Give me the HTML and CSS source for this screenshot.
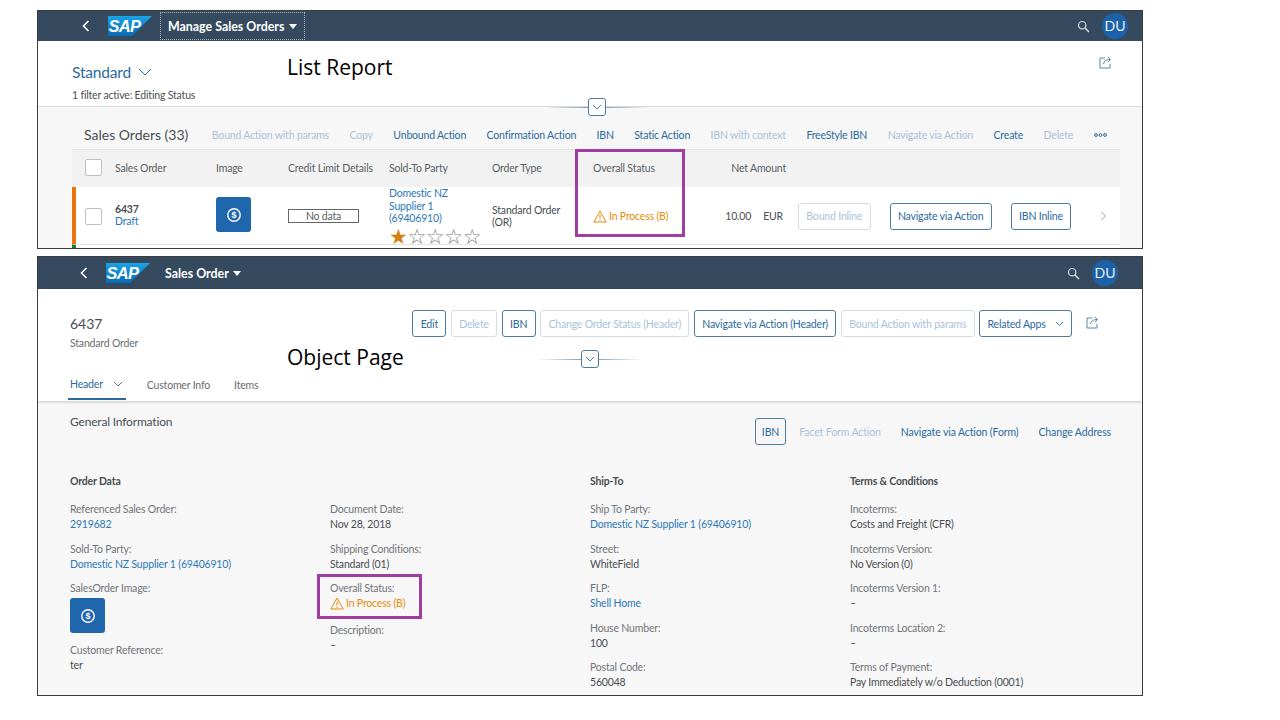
FILE: index.html
```html
<!DOCTYPE html>
<html lang="en">
<head>
  <meta charset="UTF-8">
  <title>List Report and Object Page</title>
  <link rel="stylesheet" href="styles.css">
</head>
<body>

<!-- List report screenshot -->
<section class="shot shot-list">
  <header class="shell">
    <button class="shell-back"><svg width="10" height="12" viewBox="0 0 10 12"><path d="M7.5 1 L2.5 6 L7.5 11" fill="none" stroke="#fff" stroke-width="1.6"/></svg></button>
    <svg class="sap-logo" width="44" height="20" viewBox="0 0 44 20">
      <defs><linearGradient id="sapblue" x1="0" y1="0" x2="0" y2="1"><stop offset="0" stop-color="#19a5e6"/><stop offset="1" stop-color="#0a6ab4"/></linearGradient></defs>
      <polygon points="0,0 44,0 24,20 0,20" fill="url(#sapblue)"/>
      <text x="0.5" y="16" class="sap-text">SAP</text>
    </svg>
    <div class="shell-title shell-title-box">Manage Sales Orders <span class="caret"></span></div>
    <div class="shell-right">
      <svg width="13" height="13" viewBox="0 0 13 13"><circle cx="5.2" cy="5.2" r="3.7" fill="none" stroke="#d5dde5" stroke-width="1.2"/><path d="M8 8 L12 12" stroke="#d5dde5" stroke-width="1.6"/></svg>
      <div class="avatar">DU</div>
    </div>
  </header>

  <div class="list-head">
    <div class="variant">Standard <svg width="14" height="8" viewBox="0 0 14 8"><path d="M1 1 L7 7 L13 1" fill="none" stroke="#2a6a9e" stroke-width="1"/></svg></div>
    <div class="filter-note">1 filter active: Editing Status</div>
    <svg class="share share-list" width="13" height="13" viewBox="0 0 13 13"><path d="M6 2 H1 V12 H11 V8" fill="none" stroke="#5a87aa" stroke-width="1"/><path d="M4.5 8 C5 5 7 3.5 11 3.5 M8.8 1 L11.5 3.5 L8.8 6" fill="none" stroke="#5a87aa" stroke-width="1"/></svg>
  </div>

  <div class="list-body">
    <div class="toolbar">
      <h2 class="table-title">Sales Orders (33)</h2>
      <a class="act off">Bound Action with params</a>
      <a class="act off">Copy</a>
      <a class="act">Unbound Action</a>
      <a class="act">Confirmation Action</a>
      <a class="act">IBN</a>
      <a class="act">Static Action</a>
      <a class="act off">IBN with context</a>
      <a class="act">FreeStyle IBN</a>
      <a class="act off">Navigate via Action</a>
      <a class="act">Create</a>
      <a class="act off">Delete</a>
      <svg class="more" width="13" height="4" viewBox="0 0 13 4"><circle cx="2" cy="2" r="1.4" fill="none" stroke="#2a6a9e"/><circle cx="6.5" cy="2" r="1.4" fill="none" stroke="#2a6a9e"/><circle cx="11" cy="2" r="1.4" fill="none" stroke="#2a6a9e"/></svg>
    </div>

    <div class="table">
      <div class="tr th">
        <div class="cell-check"><span class="check"></span></div>
        <div>Sales Order</div>
        <div>Image</div>
        <div>Credit Limit Details</div>
        <div>Sold-To Party</div>
        <div>Order Type</div>
        <div>Overall Status</div>
        <div class="num">Net Amount</div>
        <div></div>
      </div>
      <div class="tr td">
        <div class="cell-check"><span class="check"></span></div>
        <div class="order-cell"><b class="order-id">6437</b><br><a class="link">Draft</a></div>
        <div><span class="thumb thumb-list"><svg width="16" height="16" viewBox="0 0 16 16"><use href="#dollar"/></svg></span></div>
        <div><span class="nodata">No data</span></div>
        <div class="party">
          <a class="link">Domestic NZ Supplier 1 (69406910)</a>
          <div class="stars"><span class="star-on">★</span>☆☆☆☆</div>
        </div>
        <div class="order-type">Standard Order (OR)</div>
        <div class="warn"><svg width="14" height="13" viewBox="0 0 14 13"><use href="#warning"/></svg>In Process (B)</div>
        <div class="amount"><span>10.00</span><span>EUR</span></div>
        <div class="row-btns">
          <span class="btn off">Bound Inline</span>
          <span class="btn">Navigate via Action</span>
          <span class="btn">IBN Inline</span>
          <svg class="row-nav" width="7" height="10" viewBox="0 0 7 10"><path d="M1.5 1 L5.5 5 L1.5 9" fill="none" stroke="#8aa0b2"/></svg>
        </div>
      </div>
      <div class="tr next-row"></div>
    </div>
  </div>

  <div class="collapse collapse-list"><span class="collapse-btn"><svg width="10" height="6" viewBox="0 0 10 6"><path d="M1 1 L5 5 L9 1" fill="none" stroke="#4f7c9e"/></svg></span></div>
  <div class="shot-label label-list">List Report</div>
  <div class="mark mark-list"></div>
</section>

<!-- Object page screenshot -->
<section class="shot shot-object">
  <header class="shell shell-object">
    <button class="shell-back"><svg width="10" height="12" viewBox="0 0 10 12"><path d="M7.5 1 L2.5 6 L7.5 11" fill="none" stroke="#fff" stroke-width="1.6"/></svg></button>
    <svg class="sap-logo" width="44" height="20" viewBox="0 0 44 20">
      <polygon points="0,0 44,0 24,20 0,20" fill="url(#sapblue)"/>
      <text x="0.5" y="16" class="sap-text">SAP</text>
    </svg>
    <div class="shell-title">Sales Order <span class="caret"></span></div>
    <div class="shell-right">
      <svg width="13" height="13" viewBox="0 0 13 13"><circle cx="5.2" cy="5.2" r="3.7" fill="none" stroke="#d5dde5" stroke-width="1.2"/><path d="M8 8 L12 12" stroke="#d5dde5" stroke-width="1.6"/></svg>
      <div class="avatar">DU</div>
    </div>
  </header>

  <div class="obj-head">
    <div class="obj-top">
      <div class="obj-titles">
        <div class="obj-id">6437</div>
        <div class="obj-type">Standard Order</div>
      </div>
      <div class="obj-actions">
        <span class="btn">Edit</span>
        <span class="btn off">Delete</span>
        <span class="btn">IBN</span>
        <span class="btn off">Change Order Status (Header)</span>
        <span class="btn">Navigate via Action (Header)</span>
        <span class="btn off">Bound Action with params</span>
        <span class="btn">Related Apps <svg class="btn-chev" width="9" height="6" viewBox="0 0 9 6"><path d="M1 1 L4.5 4.5 L8 1" fill="none" stroke="#4f7c9e"/></svg></span>
        <svg class="share" width="13" height="13" viewBox="0 0 13 13"><path d="M6 2 H1 V12 H11 V8" fill="none" stroke="#5a87aa" stroke-width="1"/><path d="M4.5 8 C5 5 7 3.5 11 3.5 M8.8 1 L11.5 3.5 L8.8 6" fill="none" stroke="#5a87aa" stroke-width="1"/></svg>
      </div>
    </div>
    <nav class="tabs">
      <a class="tab tab-on">Header <svg width="10" height="6" viewBox="0 0 10 6"><path d="M1 1 L5 5 L9 1" fill="none" stroke="#4f7c9e"/></svg></a>
      <a class="tab">Customer Info</a>
      <a class="tab">Items</a>
    </nav>
  </div>

  <div class="obj-body">
    <div class="section-top">
      <h3 class="section-title">General Information</h3>
      <div class="section-actions">
        <span class="btn">IBN</span>
        <a class="act off">Facet Form Action</a>
        <a class="act">Navigate via Action (Form)</a>
        <a class="act">Change Address</a>
      </div>
    </div>

    <div class="form">
      <div class="form-col">
        <h4>Order Data</h4>
        <div class="field"><label>Referenced Sales Order:</label><a class="link">2919682</a></div>
        <div class="field"><label>Sold-To Party:</label><a class="link">Domestic NZ Supplier 1 (69406910)</a></div>
        <div class="field field-img"><label>SalesOrder Image:</label><span class="thumb thumb-form"><svg width="16" height="16" viewBox="0 0 16 16"><use href="#dollar"/></svg></span></div>
        <div class="field"><label>Customer Reference:</label><span>ter</span></div>
      </div>
      <div class="form-col">
        <h4>&nbsp;</h4>
        <div class="field"><label>Document Date:</label><span>Nov 28, 2018</span></div>
        <div class="field"><label>Shipping Conditions:</label><span>Standard (01)</span></div>
        <div class="field field-status">
          <label>Overall Status:</label>
          <span class="warn"><svg width="14" height="13" viewBox="0 0 14 13"><use href="#warning"/></svg>In Process (B)</span>
          <div class="mark mark-form"></div>
        </div>
        <div class="field"><label>Description:</label><span>–</span></div>
      </div>
      <div class="form-col">
        <h4>Ship-To</h4>
        <div class="field"><label>Ship To Party:</label><a class="link">Domestic NZ Supplier 1 (69406910)</a></div>
        <div class="field"><label>Street:</label><span>WhiteField</span></div>
        <div class="field"><label>FLP:</label><a class="link">Shell Home</a></div>
        <div class="field"><label>House Number:</label><span>100</span></div>
        <div class="field"><label>Postal Code:</label><span>560048</span></div>
      </div>
      <div class="form-col">
        <h4>Terms &amp; Conditions</h4>
        <div class="field"><label>Incoterms:</label><span>Costs and Freight (CFR)</span></div>
        <div class="field"><label>Incoterms Version:</label><span>No Version (0)</span></div>
        <div class="field"><label>Incoterms Version 1:</label><span>–</span></div>
        <div class="field"><label>Incoterms Location 2:</label><span>–</span></div>
        <div class="field"><label>Terms of Payment:</label><span>Pay Immediately w/o Deduction (0001)</span></div>
      </div>
    </div>
  </div>

  <div class="collapse collapse-object"><span class="collapse-btn"><svg width="10" height="6" viewBox="0 0 10 6"><path d="M1 1 L5 5 L9 1" fill="none" stroke="#4f7c9e"/></svg></span></div>
  <div class="shot-label label-object">Object Page</div>
</section>

<!-- shared icons -->
<svg class="icon-defs">
  <symbol id="dollar" viewBox="0 0 16 16">
    <circle cx="8" cy="8" r="6.2" fill="none" stroke="#fff" stroke-width="1.4"/>
    <text x="8" y="11.2" text-anchor="middle" class="dollar-text">$</text>
  </symbol>
  <symbol id="warning" viewBox="0 0 14 13">
    <path d="M7 1 L13.2 12 H0.8 Z" fill="none" stroke="#e78c07" stroke-width="1" stroke-linejoin="round"/>
    <path d="M7 4.5 V8.6 M7 9.6 V11" stroke="#e78c07" stroke-width="1"/>
  </symbol>
</svg>

</body>
</html>
```

FILE: styles.css
```css
* {
  box-sizing: border-box;
}

body {
  margin: 0;
  padding: 10px 0 0 37px;
  background: #fff;
  font-family: "Lato", "Liberation Sans", sans-serif;
  font-size: 10.5px;
  letter-spacing: -0.18px;
  color: #4a4e52;
}

.shot {
  position: relative;
  width: 1106px;
  border: 1px solid #3c3c3c;
  overflow: hidden;
  background: #fff;
}

.shot-list {
  height: 239px;
  margin-bottom: 7px;
}

.shot-object {
  height: 440px;
}

/* shell bar */
.shell {
  display: flex;
  align-items: center;
  height: 30px;
  padding: 0 14px 0 43px;
  background: #354a5f;
  color: #fff;
}

.shell-object {
  height: 32px;
  padding: 0 24px 0 41px;
}

.shell-back {
  display: flex;
  padding: 0;
  margin-right: 17px;
  border: 0;
  background: none;
}

.sap-logo {
  flex: none;
}

.sap-text {
  font: italic bold 16.5px "Liberation Sans", sans-serif;
  fill: #fff;
  letter-spacing: -0.7px;
}

.shell-title {
  margin-left: 15px;
  font-size: 12.4px;
  font-weight: 700;
  letter-spacing: 0;
  white-space: nowrap;
}

.shell-title-box {
  display: flex;
  align-items: center;
  gap: 4px;
  height: 28px;
  margin-left: 8px;
  padding: 0 7px;
  border: 1px dotted #a9b4be;
}

.caret {
  display: inline-block;
  width: 0;
  height: 0;
  margin-left: 1px;
  vertical-align: 2px;
  border-left: 4px solid transparent;
  border-right: 4px solid transparent;
  border-top: 5px solid #fff;
}

.shell-right {
  display: flex;
  align-items: center;
  gap: 12px;
  margin-left: auto;
}

.avatar {
  width: 26px;
  height: 26px;
  border-radius: 50%;
  background: #1d62a8;
  font-size: 14px;
  letter-spacing: 0;
  line-height: 26px;
  text-align: center;
  color: #e8eef4;
}

/* list report */
.list-head {
  position: relative;
  height: 66px;
  padding: 22px 34px 0;
  border-bottom: 1px solid #d9d9d9;
}

.variant {
  display: flex;
  align-items: center;
  gap: 7px;
  font-size: 15.5px;
  line-height: 18px;
  color: #2a6a9e;
}

.filter-note {
  margin-top: 7px;
  line-height: 14px;
  color: #4a4f54;
}

.share-list {
  position: absolute;
  top: 15px;
  right: 30px;
}

.list-body {
  padding: 0 22px 0 34px;
  background: #f7f7f7;
}

.toolbar {
  display: flex;
  align-items: center;
  gap: 20.5px;
  height: 43px;
  padding: 13px 0 0 12px;
  border-bottom: 1px solid #e5e5e5;
}

.table-title {
  flex: none;
  margin: 0 3px 0 0;
  font-size: 14px;
  font-weight: 400;
  letter-spacing: 0;
  color: #4a4e52;
  white-space: nowrap;
}

.act {
  color: #2a6a9e;
  white-space: nowrap;
}

.act.off {
  color: #a9c3d8;
}

.tr {
  display: grid;
  grid-template-columns: 43px 101px 72px 101px 103px 101px 100px 103px 1fr;
  align-items: center;
}

.th {
  height: 37px;
  padding-bottom: 2px;
  background: #f2f2f2;
  color: #5a5f64;
}

.num {
  padding-right: 10px;
  text-align: right;
}

.td {
  height: 58px;
  border-left: 4px solid #e9730c;
  border-bottom: 1px solid #e5e5e5;
  background: #fff;
  grid-template-columns: 39px 101px 72px 101px 103px 101px 100px 103px 1fr;
  line-height: 12.5px;
}

.next-row {
  height: 4px;
  border-left: 4px solid #107e3e;
  background: #fff;
}

.cell-check {
  padding-left: 13px;
  line-height: 0;
}

.td .cell-check {
  padding-left: 9px;
}

.check {
  display: inline-block;
  width: 17px;
  height: 17px;
  border: 1px solid #bfbfbf;
  border-radius: 2px;
  background: #fff;
}

.order-cell {
  margin-top: -2px;
}

.order-id {
  font-weight: 700;
}

.link {
  color: #2a78b8;
}

.thumb {
  display: flex;
  align-items: center;
  justify-content: center;
  width: 35px;
  height: 35px;
  border-radius: 3px;
  background: #1f66ad;
}

.thumb-list {
  margin-top: -3px;
}

.dollar-text {
  font: bold 9px "Liberation Sans", sans-serif;
  fill: #fff;
}

.icon-defs {
  display: none;
}

.nodata {
  display: block;
  width: 71px;
  height: 14px;
  border: 1px solid #666;
  line-height: 12px;
  text-align: center;
  color: #5a5f64;
}

.party {
  align-self: start;
  padding-right: 30px;
}

.order-type {
  padding-right: 15px;
}

.stars {
  margin-top: 3px;
  font-size: 21px;
  line-height: 18px;
  white-space: nowrap;
  letter-spacing: -0.4px;
  color: #7a7a7a;
  font-family: "DejaVu Sans", sans-serif;
}

.star-on {
  color: #d5820f;
}

.warn {
  display: flex;
  align-items: center;
  gap: 2px;
  color: #e78c07;
}

.amount {
  display: flex;
  justify-content: flex-end;
  gap: 12px;
  padding-right: 13px;
}

.row-btns {
  display: flex;
  align-items: center;
  gap: 19px;
  padding-left: 2px;
}

.btn {
  display: inline-flex;
  align-items: center;
  height: 27px;
  padding: 0 7.35px;
  border: 1px solid #4f7c9e;
  border-radius: 3px;
  background: #fff;
  color: #2a6a9e;
  white-space: nowrap;
}

.btn.off {
  border-color: #d3dde5;
  color: #a9c3d8;
}

.row-nav {
  margin-left: 10px;
}

/* object page */
.obj-head {
  position: relative;
  height: 112px;
  padding: 0 30px 0 32px;
  box-shadow: 0 1px 3px rgba(0, 0, 0, 0.2);
}

.obj-top {
  display: flex;
  justify-content: space-between;
  height: 81px;
  padding-top: 21px;
}

.obj-titles {
  padding-top: 4px;
}

.obj-id {
  font-size: 14px;
  letter-spacing: 0;
  line-height: 20px;
}

.obj-type {
  margin-top: 2px;
  line-height: 14px;
  color: #6a6d70;
}

.obj-actions {
  display: flex;
  align-items: flex-start;
  gap: 4.5px;
}

.btn-chev {
  margin-left: 9px;
}

.obj-actions .share {
  margin: 6px 13px 0 9.5px;
}

.tabs {
  display: flex;
  gap: 24px;
  height: 31px;
}

.tab {
  display: flex;
  align-items: center;
  gap: 8px;
  height: 30px;
  color: #6a6d70;
}

.tab-on {
  gap: 10px;
  margin: 0 -3px 0 -2px;
  padding: 0 3px 1px 2px;
  height: 30px;
  border-bottom: 2px solid #2a6a9e;
  color: #2a6a9e;
}

.obj-body {
  height: 296px;
  padding: 0 31px 0 32px;
  background: #f7f7f7;
}

.section-top {
  display: flex;
  justify-content: space-between;
  height: 73px;
  padding-top: 13px;
}

.section-title {
  margin: 0;
  font-size: 12px;
  font-weight: 400;
  line-height: 16px;
  color: #4a4f54;
}

.section-actions {
  display: flex;
  align-items: center;
  align-self: flex-start;
  gap: 20px;
  padding-top: 4px;
  letter-spacing: -0.12px;
}

.section-actions .btn {
  margin-right: -7px;
  padding: 0 6px;
  background: none;
}

.form {
  display: grid;
  grid-template-columns: repeat(4, 260px);
}

.form-col h4 {
  margin: 0 0 13px;
  font-size: 10.5px;
  font-weight: 700;
  line-height: 15px;
}

.field {
  display: flex;
  flex-direction: column;
  align-items: flex-start;
  height: 39.5px;
  line-height: 15px;
}

.field label {
  color: #72767a;
}

.field-img {
  height: 62px;
}

.thumb-form {
  margin-top: 2px;
}

.field-status {
  position: relative;
  height: 42px;
}

.mark {
  position: absolute;
  border: 3px solid #a13da0;
  pointer-events: none;
}

.mark-list {
  left: 537px;
  top: 138px;
  width: 110px;
  height: 88px;
}

.mark-form {
  left: -13px;
  top: -7px;
  width: 105px;
  height: 45px;
}

.shot-label {
  position: absolute;
  font-family: "Open Sans", sans-serif;
  font-size: 21px;
  letter-spacing: 0;
  line-height: 28px;
  color: #000;
}

.label-list {
  left: 249px;
  top: 42px;
}

.label-object {
  left: 249px;
  top: 86px;
}

.collapse {
  position: absolute;
  display: flex;
  justify-content: center;
  align-items: center;
  width: 105px;
  height: 18px;
  background: linear-gradient(to right, transparent, #8aa5bb 40%, #8aa5bb 60%, transparent) center / 100% 1px no-repeat;
}

.collapse-list {
  left: 506px;
  top: 87px;
}

.collapse-object {
  left: 499px;
  top: 93px;
}

.collapse-btn {
  display: flex;
  align-items: center;
  justify-content: center;
  width: 18px;
  height: 18px;
  border: 1px solid #4f7c9e;
  border-radius: 3px;
  background: #fff;
}
```
